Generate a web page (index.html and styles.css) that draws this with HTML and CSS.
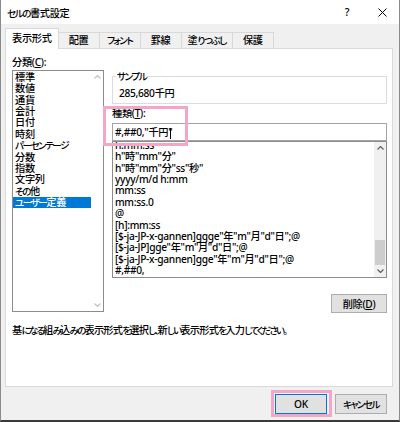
FILE: index.html
```html
<!DOCTYPE html>
<html lang="ja">
<head>
<meta charset="utf-8">
<title>セルの書式設定</title>
<link rel="stylesheet" href="styles.css">
</head>
<body>
<div class="window">
  <div class="titlebar">
    <span class="title"><span class="kn">セルの</span>書式設定</span>
    <span class="tb-btn help">?</span>
    <span class="tb-btn close"><svg width="9" height="9" viewBox="0 0 9 9"><path d="M0.5 0.5L8.5 8.5M8.5 0.5L0.5 8.5" stroke="#000" stroke-width="1" fill="none"/></svg></span>
  </div>
  <div class="tabs">
    <div class="tab active">表示形式</div>
    <div class="tab">配置</div>
    <div class="tab"><span class="kn">フォント</span></div>
    <div class="tab">罫線</div>
    <div class="tab">塗<span class="kn">りつぶし</span></div>
    <div class="tab">保護</div>
  </div>
  <div class="panel">
    <div class="main">
      <div class="cat-col">
        <div class="label">分類(<u>C</u>):</div>
        <div class="listbox cat-list">
          <ul class="items">
            <li>標準</li>
            <li>数値</li>
            <li>通貨</li>
            <li>会計</li>
            <li>日付</li>
            <li>時刻</li>
            <li><span class="kn">パーセンテージ</span></li>
            <li>分数</li>
            <li>指数</li>
            <li>文字列</li>
            <li><span class="kn">その</span>他</li>
            <li class="selected"><span class="kn">ユーザー</span>定義</li>
          </ul>
          <div class="vscroll disabled">
            <div class="arrow"><svg width="7" height="4" viewBox="0 0 7 4"><polyline points="0.5,3.5 3.5,0.5 6.5,3.5"/></svg></div>
            <div class="track"></div>
            <div class="arrow"><svg width="7" height="4" viewBox="0 0 7 4"><polyline points="0.5,0.5 3.5,3.5 6.5,0.5"/></svg></div>
          </div>
        </div>
      </div>
      <div class="fmt-col">
        <div class="sample">
          <span class="legend"><span class="kn">サンプル</span></span>
          <div class="sample-value">285,680千円</div>
        </div>
        <div class="label type-label">種類(<u>T</u>):</div>
        <div class="textbox">#,##0,"千円"<span class="caret"></span></div>
        <div class="listbox fmt-list">
          <ul class="items">
            <li>h:mm:ss</li>
            <li>h"時"mm"分"</li>
            <li>h"時"mm"分"ss"秒"</li>
            <li>yyyy/m/d h:mm</li>
            <li>mm:ss</li>
            <li>mm:ss.0</li>
            <li>@</li>
            <li>[h]:mm:ss</li>
            <li>[$-ja-JP-x-gannen]ggge"年"m"月"d"日";@</li>
            <li>[$-ja-JP]gge"年"m"月"d"日";@</li>
            <li>[$-ja-JP-x-gannen]gge"年"m"月"d"日";@</li>
            <li>#,##0,</li>
          </ul>
          <div class="vscroll">
            <div class="arrow"><svg width="7" height="4" viewBox="0 0 7 4"><polyline points="0.5,3.5 3.5,0.5 6.5,3.5"/></svg></div>
            <div class="track"></div>
            <div class="thumb"></div>
            <div class="arrow"><svg width="7" height="4" viewBox="0 0 7 4"><polyline points="0.5,0.5 3.5,3.5 6.5,0.5"/></svg></div>
          </div>
        </div>
        <div class="del-row"><button class="btn del">削除(<u>D</u>)</button></div>
      </div>
    </div>
    <p class="desc">基<span class="kn">になる</span>組<span class="kn">み</span>込<span class="kn">みの</span>表示形式<span class="kn">を</span>選択<span class="kn">し、</span>新<span class="kn">しい</span>表示形式<span class="kn">を</span>入力<span class="kn">してください。</span></p>
  </div>
  <div class="actions">
    <button class="btn ok">OK</button>
    <button class="btn"><span class="kn">キャンセル</span></button>
  </div>
  <div class="mark mark-type"></div>
  <div class="mark mark-ok"></div>
</div>
</body>
</html>
```
FILE: styles.css
```css
* { box-sizing: border-box; }
html, body { margin: 0; padding: 0; }
body {
  width: 400px;
  height: 422px;
  overflow: hidden;
  background: #f0f0f0;
  font-family: "Noto Sans", "Noto Sans CJK JP", sans-serif;
  font-size: 10.2px;
  font-weight: 500;
  letter-spacing: -0.3px;
  color: #000;
  font-feature-settings: "palt";
}
/* kana runs: narrower, like the UI font of the original */
.kn {
  font-size: 9.6px;
  letter-spacing: -1.5px;
}
.window {
  position: relative;
  width: 400px;
  height: 422px;
  border-left: 1px solid #8a8a8a;
  border-right: 1px solid #8a8a8a;
  border-bottom: 2px solid #3a3a3a;
  background: #f0f0f0;
}
.titlebar {
  height: 24px;
  background: #fff;
  display: flex;
  align-items: center;
}
.title {
  flex: 1;
  padding-left: 6px;
}
.tb-btn {
  display: flex;
  justify-content: center;
  align-items: center;
  height: 24px;
}
.help { width: 36px; font-size: 10.5px; }
.close { width: 34px; }

.tabs {
  display: flex;
  align-items: flex-end;
  height: 24px;
  padding-left: 4px;
}
.tab {
  height: 16px;
  min-width: 41px;
  padding: 0 6px;
  border-top: 1px solid #d9d9d9;
  border-right: 1px solid #d9d9d9;
  background: #f0f0f0;
  text-align: center;
  line-height: 14px;
}
.tab.active {
  height: 21px;
  min-width: 50px;
  border-left: 1px solid #d9d9d9;
  background: #fff;
  margin-bottom: -1px;
  padding-top: 3px;
  line-height: 13px;
  position: relative;
  z-index: 1;
}

.panel {
  margin-left: 4px;
  width: 388px;
  height: 339px;
  background: #fff;
  border: 1px solid #d9d9d9;
}
.main {
  display: flex;
  padding: 7px 5px 0 6px;
}
.cat-col { width: 92px; }
.label { line-height: 13px; }
.listbox {
  display: flex;
  border: 1px solid #8c8c8c;
  background: #fff;
}
.cat-list { margin-top: 1px; height: 242px; }
.items {
  list-style: none;
  margin: 0;
  padding: 0;
  flex: 1;
  min-width: 0;
}
.cat-list .items { padding-top: 1px; }
.fmt-list .items { overflow: hidden; }
.items li {
  height: 11.37px;
  line-height: 11.37px;
  padding-left: 2px;
  white-space: nowrap;
}
.items li.selected { background: #0078d7; color: #fff; }
.vscroll {
  width: 12px;
  display: flex;
  flex-direction: column;
  background: #f0f0f0;
}
.vscroll.disabled { background: #fff; }
.arrow {
  height: 12px;
  display: flex;
  align-items: center;
  justify-content: center;
}
.arrow polyline { fill: none; stroke: #606060; stroke-width: 1.2; }
.disabled .arrow polyline { stroke: #c2c2c2; }
.track { flex: 1; }
.thumb { height: 25px; margin: 0 1px; background: #cdcdcd; }

.fmt-col { margin-left: 8px; width: 275px; }
.sample {
  margin-top: 20px;
  height: 28px;
  border: 1px solid #dcdcdc;
}
.legend {
  display: block;
  width: max-content;
  margin: -7px 0 0 3px;
  padding: 0 1px;
  background: #fff;
  line-height: 13px;
}
.sample-value {
  margin-top: 4px;
  padding-left: 6px;
  line-height: 13px;
}
.type-label { margin-top: 3px; }
.textbox {
  margin-top: 3px;
  height: 18px;
  border: 1px solid #a5a5a5;
  line-height: 16px;
  padding-left: 2px;
  white-space: nowrap;
}
.caret {
  display: inline-block;
  width: 1px;
  height: 11px;
  background: #000;
  vertical-align: middle;
  margin-left: -2px;
}
.fmt-list { height: 137px; }
.fmt-list .items li:first-child { margin-top: -2px; }

.del-row {
  display: flex;
  justify-content: flex-end;
  margin-top: 16px;
}
.btn {
  font: inherit;
  letter-spacing: inherit;
  color: #000;
  padding: 0;
  background: #e1e1e1;
  border: 1px solid #adadad;
  border-radius: 0;
}
.del { width: 56px; height: 19px; line-height: 16px; }
.desc {
  margin: 11px 0 0;
  padding-left: 6px;
  line-height: 13px;
  white-space: nowrap;
  letter-spacing: -0.7px;
}
.desc .kn { letter-spacing: -1.9px; }
.actions {
  display: flex;
  justify-content: flex-end;
  gap: 8px;
  margin-top: 7px;
  padding-right: 12px;
}
.actions .btn { width: 52px; height: 20px; }
.btn.ok { border-color: #0078d7; }

.mark {
  position: absolute;
  border: 3px solid #f4a6c8;
}
.mark-type { left: 102px; top: 106px; width: 85px; height: 40px; }
.mark-ok { left: 270px; top: 390px; width: 61px; height: 27px; }
```
